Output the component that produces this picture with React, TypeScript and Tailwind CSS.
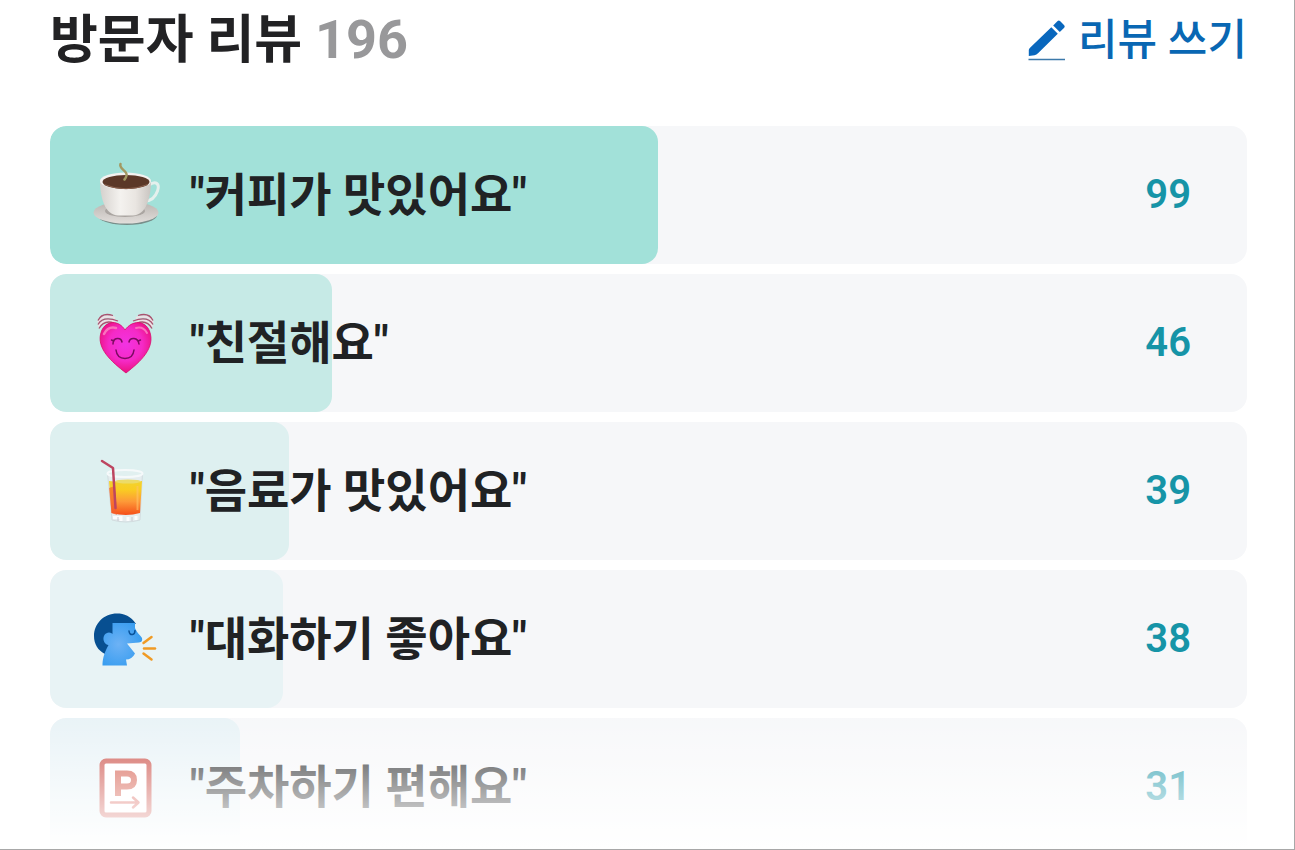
import type { ReactNode } from 'react';

function PencilIcon() {
  return (
    <svg viewBox="0 0 38 42" className="h-[42px] w-[38px] shrink-0" aria-hidden="true">
      <path d="M25.200 6.500 L29.600 2.100 Q30.800 1 32 2.100 L36.200 6.300 Q37.300 7.500 36.200 8.700 L31.800 13 Z" fill="#0967bd" />
      <path d="M23.300 8.300 L29.800 14.800 L10 34.300 Q8.500 35.900 6.500 36.200 L.8 37 L.8 31 Q.9 29.500 2.300 28.500 Z" fill="#0967bd" />
      <path d="M.5 40.500 H37" stroke="#3c79aa" strokeWidth="1.600" />
    </svg>
  );
}

function CoffeeIcon() {
  return (
    <svg viewBox="0 0 90 80" className="h-20 w-[90px]" aria-hidden="true">
      <defs>
        <linearGradient id="cup" x1="0" x2="1" y1="0" y2="0">
          <stop offset="0" stopColor="#d5d1cd" />
          <stop offset=".4" stopColor="#f4f2ef" />
          <stop offset=".7" stopColor="#e9e5e1" />
          <stop offset="1" stopColor="#c9c5c1" />
        </linearGradient>
        <linearGradient id="saucer" x1="0" x2="0" y1="0" y2="1">
          <stop offset="0" stopColor="#b9b4b0" />
          <stop offset="1" stopColor="#e2dedb" />
        </linearGradient>
      </defs>
      <ellipse cx="47" cy="60" rx="30" ry="10" fill="#788e8a" />
      <ellipse cx="46" cy="57.500" rx="32.500" ry="11" fill="url(#saucer)" />
      <ellipse cx="45" cy="56" rx="20" ry="6" fill="#aaa5a1" />
      <path d="M69 30 C76 25 80 29 77.500 36 C75 43 70 46 65 46" fill="none" stroke="#e4f0ed" strokeWidth="3" />
      <path d="M20 25 C20 43 25 60 38 60.500 H53 C66 60 71 43 71 25 Z" fill="url(#cup)" />
      <ellipse cx="45.500" cy="26" rx="25.500" ry="8.500" fill="#f4f2f0" />
      <ellipse cx="46" cy="27" rx="23.500" ry="7" fill="#5b3828" />
      <path d="M24 29.500 Q46 38 68 29.500" fill="none" stroke="#8c6451" strokeWidth="1" />
      <path d="M40.500 9 C38.500 14 48 16 46.500 20.500 Q46 23 44.500 24.500" fill="none" stroke="#a39962" strokeWidth="2.500" strokeLinecap="round" />
    </svg>
  );
}

function HeartIcon() {
  return (
    <svg viewBox="0 -2 90 80" className="h-20 w-[90px]" aria-hidden="true">
      <defs>
        <radialGradient id="heart" cx=".5" cy=".43" r=".6">
          <stop offset="0" stopColor="#f233e3" />
          <stop offset=".55" stopColor="#f52ac6" />
          <stop offset="1" stopColor="#e90d76" />
        </radialGradient>
      </defs>
      <g fill="none" stroke="#f0dfe4" strokeWidth="2">
        <path d="M18 17.500 Q23 8.500 35 13 M18.500 21.500 Q24 12.500 35 17" />
        <path d="M73 17.500 Q68 8.500 56 13 M72.500 21.500 Q67 12.500 56 17" />
      </g>
      <g fill="none" stroke="#aa526f" strokeWidth="1.300">
        <path d="M18 15.500 Q22 7 33 10.500 M18 19.500 Q23 10.500 38 16 M19 23.500 Q24 14.500 34 18" />
        <path d="M73 15.500 Q69 7 58 10.500 M73 19.500 Q68 10.500 53 16 M72 23.500 Q67 14.500 57 18" />
      </g>
      <path d="M45 25 C39 15 26 15 21.500 26 C15 43 32 57 46 68 C60 57 76 43 69.500 26 C65 15 52 15 45 25 Z" fill="url(#heart)" stroke="#d90b6c" strokeWidth=".8" />
      <path d="M24 29 Q28 21 36 23" fill="none" stroke="#fa71bd" strokeWidth="2.500" strokeLinecap="round" />
      <path d="M56 23 Q63 21 67 28" fill="none" stroke="#fa71bd" strokeWidth="2" strokeLinecap="round" />
      <g fill="none" stroke="#7b0b60" strokeWidth="1.500" strokeLinecap="round">
        <path d="M33 39 C33 32 41 32 42 37 M31.500 35 l2.500 1 M49 37 C50 32 58 32 59 39 M60.500 35 l-2.500 1" />
        <path d="M36 45 Q37 53.500 45 53.500 Q53 53.500 54 45" />
      </g>
    </svg>
  );
}

function DrinkIcon() {
  return (
    <svg viewBox="0 1 90 80" className="h-20 w-[90px]" aria-hidden="true">
      <defs>
        <linearGradient id="juice" x1="0" x2="0" y1="0" y2="1">
          <stop offset="0" stopColor="#f2d32e" />
          <stop offset=".25" stopColor="#f9cd22" />
          <stop offset=".6" stopColor="#fd9a38" />
          <stop offset="1" stopColor="#f54e19" />
        </linearGradient>
      </defs>
      <path d="M27.500 23 L32 70 Q46 74 60 70 L62.500 23 Z" fill="#e5edef" stroke="#d2dcdf" strokeWidth="1" />
      <ellipse cx="45" cy="23.500" rx="17.500" ry="3.500" fill="#e1f0f0" stroke="#f5f9fa" strokeWidth="2" />
      <path d="M29 31 Q45 33 62 31 L60 63 Q46 67 31.500 63 Z" fill="url(#juice)" />
      <path d="M29 38 L35 36 L37 65 L31.500 63 Z" fill="#f55e2d" opacity=".65" />
      <ellipse cx="48" cy="31.500" rx="13" ry="2" fill="#ecdb68" />
      <path d="M22 11 L33 18 L35.500 58" fill="none" stroke="#bd4560" strokeWidth="2.500" strokeLinecap="round" strokeLinejoin="round" />
      <path d="M57.500 36 V60" stroke="#ffc368" strokeWidth="2" opacity=".6" />
      <path d="M33 67.500 H41 V71 M48 67 V71 M56 66 V70" fill="none" stroke="#fbfcfd" strokeWidth="3" />
      <path d="M38 67 V71 M52 67 V71" stroke="#c8c8d0" strokeWidth="1" />
    </svg>
  );
}

function SpeakingIcon() {
  return (
    <svg viewBox="0 -1 90 80" className="h-20 w-[90px]" aria-hidden="true">
      <defs>
        <radialGradient id="face" cx=".4" cy=".5" r=".7">
          <stop offset="0" stopColor="#6db2f5" />
          <stop offset="1" stopColor="#319aef" />
        </radialGradient>
      </defs>
      <path d="M56 24 C51 16 44 13.500 37 13.500 C24 13.500 14 23.500 14 36 C14 44 18 50.500 25 54 L38 48 V24 Z" fill="#074f91" />
      <path d="M32.500 23 H55 V28 C57 33 60.500 35.500 62 38 Q63 42 59 42.500 L47 43.500 L55 53.500 Q52 59.500 46 59.500 L47 65.500 H22.500 C22.500 60 23.500 54 28.500 45 C22 44 21.500 33 29 32.500 Q31.500 32.500 32.500 34 Z" fill="url(#face)" />
      <path d="M49 31 Q49.500 35 52.500 34.500 Q55 34 55 30.500" fill="none" stroke="#09529a" strokeWidth="1.500" strokeLinecap="round" />
      <g fill="none" stroke="#f09a24" strokeWidth="2.500" strokeLinecap="round">
        <path d="M63.500 43 L71.500 37" />
        <path d="M64 48.500 H75" />
        <path d="M63.500 53.500 L71.500 59.500" />
      </g>
    </svg>
  );
}

function ParkingIcon() {
  return (
    <svg viewBox="0 -3 90 80" className="h-20 w-[90px]" aria-hidden="true">
      <rect x="22" y="11" width="47" height="54" rx="4" fill="#fff" stroke="#c9463d" strokeWidth="5" />
      <path d="M38 46 V23.500 H47 Q54 23.500 54 30 Q54 36.500 47 36.500 H38" fill="none" stroke="#d2503f" strokeWidth="6" />
      <path d="M31 52.500 H58 M53 47.500 L58.500 52.500 L53 57.500" fill="none" stroke="#d95f55" strokeWidth="2.500" strokeLinecap="round" strokeLinejoin="round" />
    </svg>
  );
}

type Review = { label: string; count: number; bar: string; icon: ReactNode };

const SCALE = 195;

const reviews: Review[] = [
  { label: '커피가 맛있어요', count: 99, bar: 'bg-[#a2e1d9]', icon: <CoffeeIcon /> },
  { label: '친절해요', count: 46, bar: 'bg-[#c6eae6]', icon: <HeartIcon /> },
  { label: '음료가 맛있어요', count: 39, bar: 'bg-[#def0f0]', icon: <DrinkIcon /> },
  { label: '대화하기 좋아요', count: 38, bar: 'bg-[#e8f3f5]', icon: <SpeakingIcon /> },
  { label: '주차하기 편해요', count: 31, bar: 'bg-[#e7f2f6]', icon: <ParkingIcon /> },
];

function ReviewRow({ review, faded }: { review: Review; faded: boolean }) {
  return (
    <li className={`relative overflow-hidden bg-[#f6f7f9] ${faded ? 'h-[131px] rounded-t-2xl' : 'h-[138px] rounded-2xl'}`}>
      <div
        className={`absolute inset-y-0 left-0 ${faded ? 'rounded-t-2xl' : 'rounded-2xl'} ${review.bar}`}
        style={{ width: `${(review.count / SCALE) * 100}%` }}
      />
      <div className="relative flex h-[138px] items-center pr-14 pl-[30px]">
        {review.icon}
        <span className="ml-5 text-[46px] leading-[52px] font-bold whitespace-nowrap text-[#202224]">"{review.label}"</span>
        <span className="ml-auto text-[40px] leading-[52px] font-semibold text-[#1694a7]">{review.count}</span>
      </div>
      {faded && <div className="absolute inset-0 bg-linear-to-b from-white/10 to-white" />}
    </li>
  );
}

export default function App() {
  return (
    <main className="min-h-screen overflow-hidden border-r border-b border-[#a8a8a8] bg-white pr-[47px] pl-[50px] font-[Roboto,'Noto_Sans_CJK_KR',sans-serif]">
      <header className="flex h-[126px] items-start justify-between pt-2.5">
        <h1 className="text-[52px] leading-[60px] font-bold text-[#222224]">
          방문자 리뷰 <span className="text-[54px] text-[#98989a]">196</span>
        </h1>
        <a href="#write" className="flex items-center gap-3 text-[43px] leading-[60px] font-medium text-[#0967b3]">
          <PencilIcon />
          리뷰 쓰기
        </a>
      </header>
      <ul className="flex flex-col gap-2.5">
        {reviews.map((review, index) => (
          <ReviewRow key={review.label} review={review} faded={index === reviews.length - 1} />
        ))}
      </ul>
    </main>
  );
}
